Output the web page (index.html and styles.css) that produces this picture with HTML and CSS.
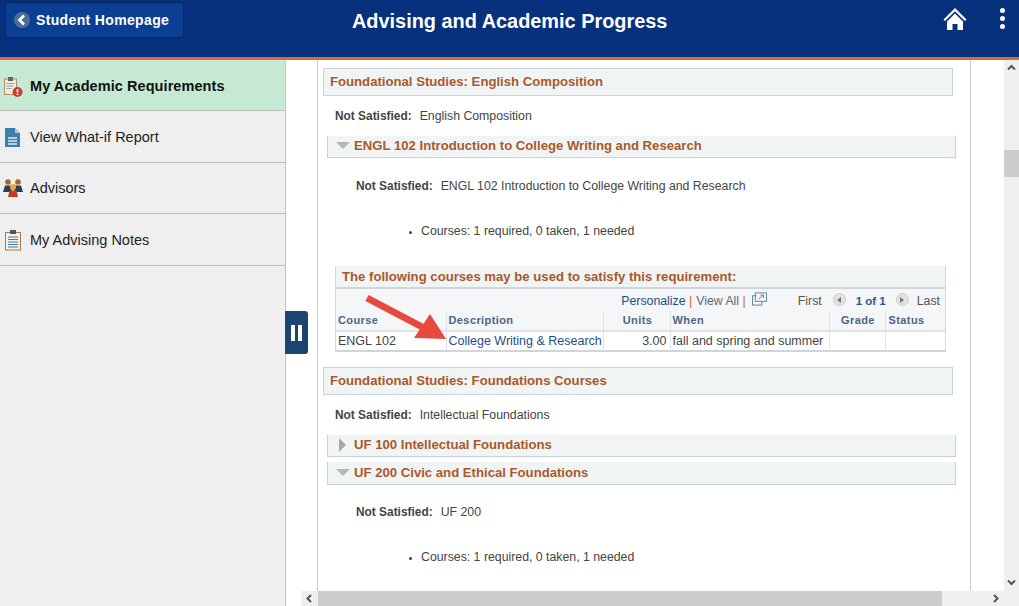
FILE: index.html
```html
<!DOCTYPE html>
<html lang="en">
  <head>
    <meta charset="UTF-8" />
    <title>Advising and Academic Progress</title>
    <link rel="stylesheet" href="styles.css">
  </head>
  <body>
    <header class="banner">
      <a class="back-btn">
        <span class="back-circle">
          <svg width="12" height="12" viewBox="0 0 12 12"><path d="M8 1.500 3.500 6 8 10.500" fill="none" stroke="#fff" stroke-width="2.600"/></svg>
        </span>
        Student Homepage
      </a>
      <h1 class="banner-title">Advising and Academic Progress</h1>
      <div class="banner-actions">
        <svg class="home-icon" width="24" height="24" viewBox="0 0 24 24"><path d="M12 1 0.500 12.500 2 14 12 4.200 22 14l1.500-1.500z" fill="#fff"/><path d="M4 14.500 12 6.500l8 8V23h-5.500v-6h-5v6H4z" fill="#fff"/></svg>
        <div class="kebab"><span></span><span></span><span></span></div>
      </div>
    </header>

    <div class="main">
      <nav class="sidebar">
        <a class="nav-item active">
          <svg class="nav-icon" width="24" height="24" viewBox="0 0 24 24">
            <rect x="3.500" y="5" width="12" height="15.500" fill="#f3ead9" stroke="#a98d6c"/>
            <rect x="7" y="3" width="5" height="4" fill="#666"/>
            <path d="M5.500 9.500h8M5.500 12h7M5.500 14.500h5" stroke="#7fa6c9"/>
            <circle cx="16.500" cy="18" r="5" fill="#d33a2c"/>
            <path d="M16.500 15v3.500M16.500 19.500V21" stroke="#fff" stroke-width="1.700"/>
          </svg>
          My Academic Requirements
        </a>
        <a class="nav-item">
          <svg class="nav-icon" width="24" height="24" viewBox="0 0 24 24">
            <path d="M4 3h10l5 5v14H4z" fill="#3f7fae"/>
            <path d="M14 3l5 5h-5z" fill="#a9cbe2"/>
            <path d="M7 13h9M7 16h9M7 19h9" stroke="#dbe8f1" stroke-width="1.400"/>
          </svg>
          View What-if Report
        </a>
        <a class="nav-item">
          <svg class="nav-icon" width="24" height="24" viewBox="0 0 24 24">
            <circle cx="7" cy="6" r="2.800" fill="#9a6a35"/>
            <circle cx="17" cy="6" r="2.800" fill="#9a6a35"/>
            <path d="M2 16l2-6.500h6L11 16zM13 16l1-6.500h6l2 6.500z" fill="#2e3d52"/>
            <circle cx="12" cy="11" r="3" fill="#e8a93c"/>
            <path d="M7 21l1.500-6.500h7L17 21z" fill="#c53a2b"/>
          </svg>
          Advisors
        </a>
        <a class="nav-item">
          <svg class="nav-icon" width="24" height="24" viewBox="0 0 24 24">
            <rect x="4.500" y="4.500" width="15" height="17.500" fill="#f5f1e6" stroke="#a9794a"/>
            <rect x="9" y="2" width="6" height="4" fill="#555"/>
            <path d="M7 9h10M7 11.500h10M7 14h10M7 16.500h10M7 19h10" stroke="#3b7fb8" stroke-width="1.200"/>
          </svg>
          My Advising Notes
        </a>
      </nav>

      <div class="content">
        <div class="viewport">
          <div class="pane">
            <div class="section-head">Foundational Studies: English Composition</div>
            <p class="status status-top"><b>Not Satisfied:</b>English Composition</p>

            <div class="sub-head">
              <span class="tri-down"></span>ENGL 102 Introduction to College Writing and Research
            </div>
            <p class="status status-sub status-engl"><b>Not Satisfied:</b>ENGL 102 Introduction to College Writing and Research</p>
            <ul class="counts"><li>Courses: 1 required, 0 taken, 1 needed</li></ul>

            <div class="grid-box">
              <div class="grid-title">The following courses may be used to satisfy this requirement:</div>
              <div class="grid-tools">
                <a class="link">Personalize</a><span class="sep">|</span><span class="muted">View All</span><span class="sep">|</span>
                <svg class="popout" width="15" height="14" viewBox="0 0 16 14"><path d="M4.500 3.500H.5v10h10v-4" fill="none" stroke="#5b7da3"/><rect x="3.500" y=".5" width="12" height="9" fill="none" stroke="#5b7da3"/><path d="M7 7l5-4M9 2.800h3.200V6" fill="none" stroke="#5b7da3"/></svg>
                <span class="pager">
                  <span class="first">First</span>
                  <span class="page-btn"><i class="left"></i></span>
                  <b class="page-num">1 of 1</b>
                  <span class="page-btn"><i class="right"></i></span>
                  <span>Last</span>
                </span>
              </div>
              <table class="grid">
                <colgroup>
                  <col class="c-course"><col class="c-desc"><col class="c-units"><col class="c-when"><col class="c-grade"><col class="c-status">
                </colgroup>
                <thead>
                  <tr><th>Course</th><th>Description</th><th class="center">Units</th><th>When</th><th class="center">Grade</th><th>Status</th></tr>
                </thead>
                <tbody>
                  <tr><td>ENGL 102</td><td><a class="link">College Writing &amp; Research</a></td><td class="num">3.00</td><td>fall and spring and summer</td><td></td><td></td></tr>
                </tbody>
              </table>
            </div>

            <div class="section-head section-two">Foundational Studies: Foundations Courses</div>
            <p class="status status-top"><b>Not Satisfied:</b>Intellectual Foundations</p>

            <div class="sub-head sub-uf100">
              <span class="tri-right"></span>UF 100 Intellectual Foundations
            </div>
            <div class="sub-head sub-uf200">
              <span class="tri-down"></span>UF 200 Civic and Ethical Foundations
            </div>
            <p class="status status-sub"><b>Not Satisfied:</b>UF 200</p>
            <ul class="counts"><li>Courses: 1 required, 0 taken, 1 needed</li></ul>
          </div>
          <div class="scroll-v">
            <svg width="15" height="15" viewBox="0 0 15 15"><path d="M4 9.500 7.500 6 11 9.500" fill="none" stroke="#555" stroke-width="2"/></svg>
            <div class="scroll-v-thumb"></div>
            <svg class="scroll-v-down" width="15" height="15" viewBox="0 0 15 15"><path d="M4 5.500 7.500 9 11 5.500" fill="none" stroke="#555" stroke-width="2"/></svg>
          </div>
        </div>
        <div class="scroll-h">
          <svg width="17" height="15" viewBox="0 0 17 15"><path d="M10 4 6.500 7.500 10 11" fill="none" stroke="#555" stroke-width="2"/></svg>
          <div class="scroll-h-thumb"></div>
          <svg class="scroll-h-right" width="17" height="15" viewBox="0 0 17 15"><path d="M7 4l3.500 3.500L7 11" fill="none" stroke="#555" stroke-width="2"/></svg>
        </div>

        <button class="collapse-btn"><span></span><span></span></button>

        <svg class="red-arrow" width="90" height="60" viewBox="0 0 90 60">
          <path d="M3 5 62 36" stroke="#e8493f" stroke-width="7" fill="none"/>
          <path d="M82 46 66 21 50 45z" fill="#e8493f"/>
        </svg>
      </div>
    </div>
  </body>
</html>
```
FILE: styles.css
```css
* {
  margin: 0;
  padding: 0;
  box-sizing: border-box;
}

html,
body {
  height: 100%;
  overflow: hidden;
}

body {
  font-family: "Liberation Sans", Arial, sans-serif;
  font-size: 12.300px;
  color: #444;
  background-color: #fff;
  display: flex;
  flex-direction: column;
}

.banner {
  height: 60px;
  flex-shrink: 0;
  background-color: #07317c;
  border-bottom: 3px solid #e0643c;
  display: flex;
  align-items: flex-start;
  position: relative;
}

.back-btn {
  margin: 2px 0 0 5px;
  width: 179px;
  height: 36px;
  display: flex;
  align-items: center;
  gap: 6px;
  padding-left: 8px;
  color: #fff;
  font-size: 14px;
  font-weight: bold;
  letter-spacing: 0.350px;
  background-color: #0a3f94;
  border: 1px solid #052258;
  border-radius: 3px;
}

.back-circle {
  width: 16px;
  height: 16px;
  border-radius: 50%;
  background-color: #4b6f94;
  display: flex;
  align-items: center;
  justify-content: center;
}

.banner-title {
  position: absolute;
  left: 352px;
  top: 9px;
  color: #fff;
  font-size: 19.900px;
  font-weight: bold;
  line-height: 24px;
}

.banner-actions {
  margin-left: auto;
  display: flex;
  align-items: flex-start;
  gap: 33px;
  padding: 7px 14px 0 0;
}

.kebab {
  display: flex;
  flex-direction: column;
  gap: 3px;
  padding-top: 1px;
}

.kebab span {
  width: 5px;
  height: 5px;
  border-radius: 50%;
  background-color: #fff;
}

.main {
  flex: 1;
  display: flex;
  min-height: 0;
}

.sidebar {
  width: 286px;
  flex-shrink: 0;
  background-color: #efefef;
  border-right: 1px solid #c4c4c4;
}

.nav-item {
  height: 51.500px;
  display: flex;
  align-items: center;
  gap: 5px;
  padding: 1px 0 0 1px;
  font-size: 14.500px;
  color: #222;
  border-bottom: 1px solid #bdbdbd;
}

.nav-item.active {
  height: 51px;
  background-color: #c6e9d3;
  color: #111;
  font-weight: bold;
  letter-spacing: 0.070px;
}

.nav-icon {
  flex-shrink: 0;
}

.content {
  flex: 1;
  min-width: 0;
  display: flex;
  flex-direction: column;
  position: relative;
}

.viewport {
  flex: 1;
  min-height: 0;
  display: flex;
  padding-left: 31px;
}

.pane {
  width: 654px;
  margin-right: 33px;
  border-left: 1px solid #c9cdd0;
  border-right: 1px solid #c9cdd0;
  padding: 8px 0 0 5px;
  overflow: hidden;
}

.section-head {
  width: 630px;
  height: 28px;
  line-height: 26px;
  padding-left: 6px;
  font-size: 13.150px;
  font-weight: bold;
  color: #a9592a;
  background-color: #f1f4f5;
  border: 1px solid #c9d2d8;
}

.section-two {
  margin-top: 15px;
}

.status {
  line-height: 14px;
}

.status b {
  margin-right: 8px;
  font-size: 11.900px;
}

.status-top {
  margin: 13px 0 0 12px;
}

.status-sub {
  margin: 20px 0 0 33px;
}

.status-engl {
  margin-top: 21px;
}

.sub-head {
  width: 629px;
  height: 22px;
  margin: 13px 0 0 4px;
  padding-bottom: 2px;
  display: flex;
  align-items: center;
  font-size: 13.150px;
  font-weight: bold;
  color: #a9592a;
  background-color: #f1f4f5;
  border-bottom: 1px solid #c9d2d8;
  border-right: 1px solid #c9d2d8;
  border-left: 1px solid #c9d2d8;
}

.sub-uf200 {
  margin-top: 5px;
  height: 23px;
}

.tri-down {
  width: 0;
  height: 0;
  margin: 0 4px 0 8px;
  border-left: 7px solid transparent;
  border-right: 7px solid transparent;
  border-top: 7px solid #b3b7ba;
}

.tri-right {
  width: 0;
  height: 0;
  margin: 0 8px 0 11px;
  border-top: 7px solid transparent;
  border-bottom: 7px solid transparent;
  border-left: 7px solid #a5a9ac;
}

.counts {
  margin: 31px 0 0 98px;
  line-height: 14px;
}

.counts li::marker {
  font-size: 9px;
}

.grid-box {
  width: 611px;
  margin: 28px 0 0 12px;
  border-right: 1px solid #d3d9dd;
  border-left: 1px solid #d3d9dd;
}

.grid-title {
  height: 23px;
  line-height: 22px;
  padding-left: 6px;
  font-size: 13.150px;
  font-weight: bold;
  color: #a9592a;
  background-color: #f1f4f5;
  border-bottom: 2px solid #cfd5d9;
}

.grid-tools {
  height: 22px;
  display: flex;
  align-items: center;
  justify-content: flex-end;
  padding: 2px 5px 0 0;
  background-color: #f4f6f7;
}

.link {
  color: #1f4e8c;
}

.sep {
  color: #c4662f;
  margin: 0 4px 0 3.500px;
}

.muted {
  color: #5a6b7d;
}

.popout {
  margin: -4px 0 0 2px;
}

.pager {
  display: flex;
  align-items: center;
  margin-left: 31px;
  color: #555;
}

.page-btn {
  width: 13px;
  height: 13px;
  margin-top: -3px;
  border-radius: 50%;
  background-color: #e2e2e2;
  border: 1px solid #cfcfcf;
  display: flex;
  align-items: center;
  justify-content: center;
}

.page-btn .left {
  border-top: 3px solid transparent;
  border-bottom: 3px solid transparent;
  border-right: 4px solid #777;
}

.page-btn .right {
  border-top: 3px solid transparent;
  border-bottom: 3px solid transparent;
  border-left: 4px solid #777;
}

.first {
  margin-right: 11px;
}

.page-num {
  margin: 0 10px;
  font-size: 11.500px;
  color: #2a5590;
}

.page-num + .page-btn {
  margin-right: 8px;
}

.grid {
  width: 100%;
  table-layout: fixed;
  border-collapse: collapse;
  border-bottom: 2px solid #cfd5d9;
}

.c-course { width: 110px; }
.c-desc { width: 157px; }
.c-units { width: 67px; }
.c-when { width: 159px; }
.c-grade { width: 56px; }

.grid th {
  height: 20px;
  padding: 0 0 2px 2px;
  font-size: 11px;
  letter-spacing: 0.400px;
  text-align: left;
  color: #4d6586;
  background-color: #f4f6f7;
  border-right: 1px solid #dfe3e6;
  border-bottom: 2px solid #dfe3e6;
}

.grid th.center {
  text-align: center;
}

.grid th:last-child {
  padding-left: 3px;
}

.grid td {
  height: 20px;
  padding-left: 2px;
  font-size: 12.500px;
  white-space: nowrap;
  border-right: 1px solid #dfe3e6;
}

.grid td.num {
  text-align: right;
  padding-right: 3px;
}

.grid th:last-child,
.grid td:last-child {
  border-right: none;
}

.scroll-v {
  width: 15px;
  background-color: #efefef;
  display: flex;
  flex-direction: column;
}

.scroll-v-thumb {
  height: 27px;
  margin-top: 75px;
  background-color: #cdcdcd;
}

.scroll-v-down {
  margin-top: auto;
  margin-bottom: 1px;
}

.scroll-h {
  height: 15px;
  margin-left: 15px;
  flex-shrink: 0;
  display: flex;
  background-color: #efefef;
  align-items: center;
}

.scroll-h-thumb {
  width: 624px;
  height: 15px;
  background-color: #cdcdcd;
}

.scroll-h-right {
  margin-left: auto;
  margin-right: 15px;
}

.collapse-btn {
  position: absolute;
  left: -1px;
  top: 251px;
  width: 23px;
  height: 43px;
  background-color: #1c4470;
  border: none;
  border-radius: 0 3px 3px 0;
  display: flex;
  align-items: center;
  justify-content: center;
  gap: 3px;
}

.collapse-btn span {
  width: 4px;
  height: 16px;
  background-color: #fff;
}

.red-arrow {
  position: absolute;
  left: 78px;
  top: 233px;
}
```
